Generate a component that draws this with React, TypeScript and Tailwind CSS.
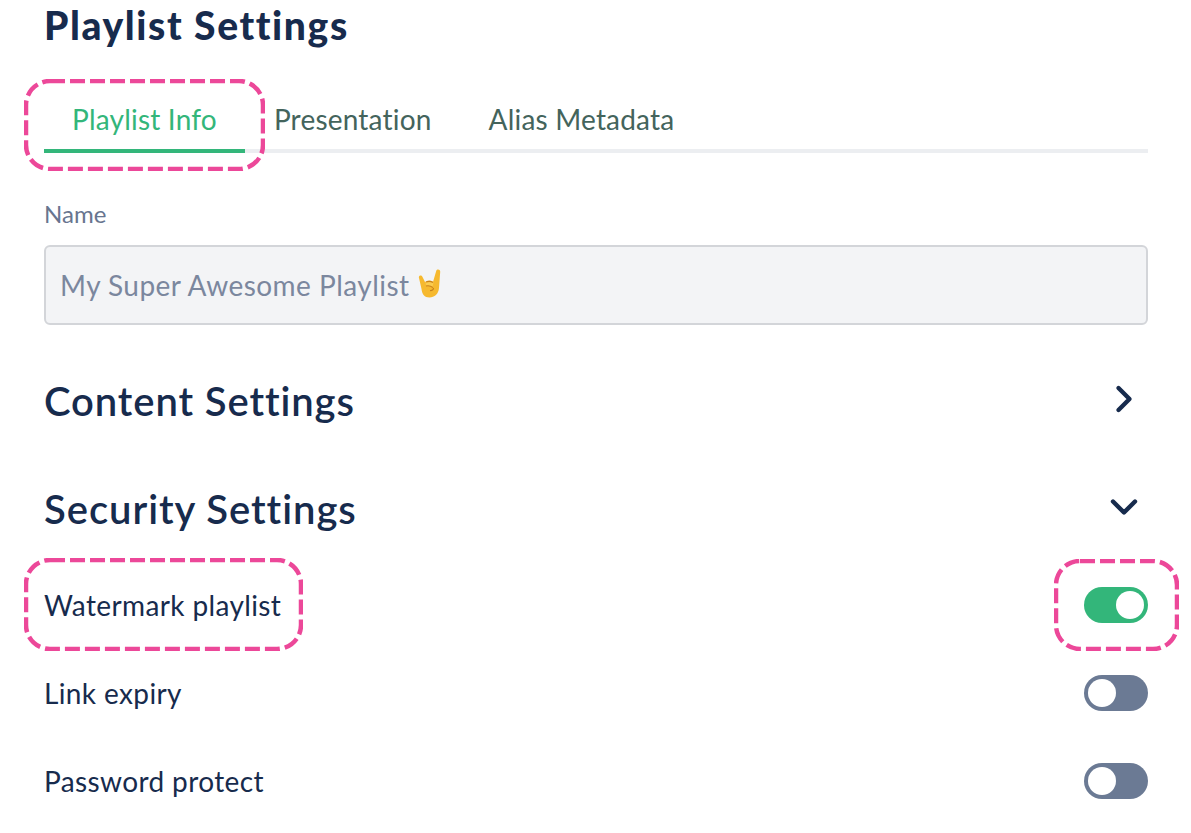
import React from 'react';
import { ChevronDown, ChevronRight } from 'lucide-react';

const DashedBox: React.FC<{ className: string; width: number; height: number }> = ({
  className,
  width,
  height,
}) => (
  <svg className={`absolute pointer-events-none ${className}`} width={width} height={height} fill="none">
    <rect
      x={2}
      y={2}
      width={width - 4}
      height={height - 4}
      rx={24}
      stroke="#ec4899"
      strokeWidth={4.5}
      strokeDasharray="15 5"
    />
  </svg>
);

const Toggle: React.FC<{ on?: boolean }> = ({ on }) => (
  <div
    className={`flex h-9 w-16 items-center rounded-full p-1 ${
      on ? 'justify-end bg-[#33b67a]' : 'justify-start bg-[#6b7a94]'
    }`}
  >
    <div className="h-7 w-7 rounded-full bg-white" />
  </div>
);

const HornsEmoji = () => (
  <svg width="24" height="29" viewBox="0 0 24 29" className="ml-[9px] mb-[3px]">
    <path
      d="M1 9c-.8-2.6 2.4-3.6 3.4-1.2L7 13h8l3.2-11c.7-2.4 4.3-1.8 4 .9L21 19c-.5 6-4.500 9.500-9.500 9.500C6.500 28.500 4 25 3.500 20z"
      fill="#f6b92f"
    />
    <path d="M7.500 12.500c2.500-1.500 6-1.500 8 .5l-.8 4.500-6.700-.8z" fill="#fbcb4e" />
    <path
      d="M8 13c2.300-1 5-.8 7 .6M8 17c2.500-.6 5 0 7 1.600M12 21.500c2 .2 3.500-.8 3.500-2.500"
      stroke="#c9821c"
      strokeWidth="1.200"
      fill="none"
    />
  </svg>
);

const SettingRow: React.FC<{ label: string; on?: boolean; className: string }> = ({ label, on, className }) => (
  <div className={`flex h-[60px] items-center justify-between ${className}`}>
    <span className="text-[28px] tracking-[0.38px] text-[#172b4d]">{label}</span>
    <Toggle on={on} />
  </div>
);

export default function App() {
  return (
    <div className="h-[833px] w-[1191px] overflow-hidden bg-white pl-[44px] pr-[43px] font-['Lato',sans-serif]">
      <h1 className="h-[52px] text-[39px] font-black leading-[50px] tracking-[1.6px] text-[#172b4d]">
        Playlist Settings
      </h1>

      {/* Tabs */}
      <div className="relative mt-[39px] flex h-[62px] border-b-4 border-[#eceef1] tracking-[0.2px]">
        <div className="-mb-1 flex h-[62px] items-center border-b-4 border-[#33b67a] px-[28px] pb-[2px] text-[28px] text-[#33b67a]">
          Playlist Info
        </div>
        <div className="flex h-[58px] items-center px-[29px] pb-[2px] text-[28px] text-[#44645c]">Presentation</div>
        <div className="flex h-[58px] items-center px-[28px] pb-[2px] text-[28px] text-[#44645c]">Alias Metadata</div>
        <DashedBox className="left-[-20px] top-[-12px]" width={241} height={92} />
      </div>

      <div className="mt-[46px] h-[30px] text-[24px] leading-[30px] text-[#68758f]">Name</div>
      <div className="mt-[16px] flex h-[80px] items-center rounded-md border-2 border-[#d3d5d9] bg-[#f3f4f6] px-[14px] text-[28px] tracking-[0.46px] text-[#7b879e]">
        My Super Awesome Playlist
        <HornsEmoji />
      </div>

      <div className="mt-[47px] flex h-[60px] items-center justify-between">
        <h2 className="mb-[2px] text-[40px] font-semibold tracking-[0.9px] text-[#172b4d]">Content Settings</h2>
        <ChevronRight size={44} color="#172b4d" strokeWidth={2.4} className="mb-[6px] mr-[2px]" />
      </div>

      <div className="mt-[48px] flex h-[60px] items-center justify-between">
        <h2 className="mb-[2px] text-[40px] font-semibold tracking-[0.95px] text-[#172b4d]">Security Settings</h2>
        <ChevronDown size={44} color="#172b4d" strokeWidth={2.4} className="mb-[6px] mr-[2px]" />
      </div>

      <div className="relative mt-[35px]">
        <SettingRow label="Watermark playlist" on className="" />
        <DashedBox className="left-[-20px] top-[-17px]" width={279} height={93} />
        <DashedBox className="right-[-31px] top-[-16px]" width={125} height={92} />
        <SettingRow label="Link expiry" className="mt-[28px]" />
        <SettingRow label="Password protect" className="mt-[28px]" />
      </div>
    </div>
  );
}
